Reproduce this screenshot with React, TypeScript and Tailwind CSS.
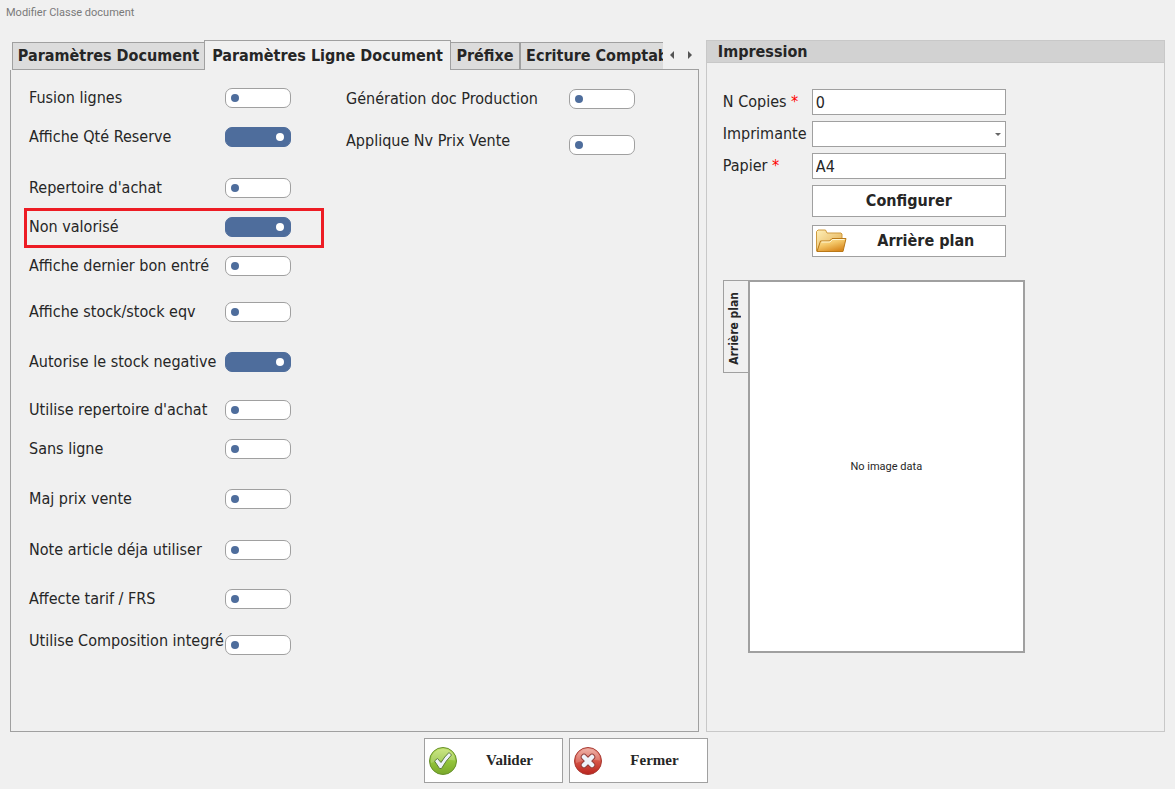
import { FC, ReactNode, useState } from "react";

const tabs = [
    { label: "Paramètres Document", width: "w-[193px]" },
    { label: "Paramètres Ligne Document", width: "w-[247px]" },
    { label: "Préfixe", width: "w-[70px]" },
    { label: "Ecriture Comptable", width: "w-[169px]" },
];

interface Option {
    label: string;
    checked?: boolean;
    highlight?: boolean;
    raised?: boolean;
    gap: string;
}

const leftOptions: Option[] = [
    { label: "Fusion lignes", gap: "mt-0" },
    { label: "Affiche Qté Reserve", gap: "mt-[19px]", checked: true },
    { label: "Repertoire d'achat", gap: "mt-[31px]" },
    { label: "Non valorisé", gap: "mt-[19px]", checked: true, highlight: true },
    { label: "Affiche dernier bon entré", gap: "mt-[19px]" },
    { label: "Affiche stock/stock eqv", gap: "mt-[26px]" },
    { label: "Autorise le stock negative", gap: "mt-[30px]", checked: true },
    { label: "Utilise repertoire d'achat", gap: "mt-7" },
    { label: "Sans ligne", gap: "mt-[19px]" },
    { label: "Maj prix vente", gap: "mt-[30px]" },
    { label: "Note article déja utiliser", gap: "mt-[31px]" },
    { label: "Affecte tarif / FRS", gap: "mt-[29px]" },
    { label: "Utilise Composition integré", gap: "mt-[22px]", raised: true },
];

const rightOptions: Option[] = [
    { label: "Génération doc Production", gap: "mt-px" },
    { label: "Applique Nv Prix Vente", gap: "mt-[22px]", raised: true },
];

const SwitchRow: FC<{ option: Option; id: string; labelWidth: string }> = ({ option, id, labelWidth }) => {
    const [on, setOn] = useState(!!option.checked);
    return (
        <div className={`relative flex items-center ${option.gap}`}>
            <label
                htmlFor={id}
                className={`shrink-0 whitespace-nowrap leading-5 ${labelWidth} ${option.raised ? "pb-2" : ""}`}
            >
                {option.label}
            </label>
            <input
                id={id}
                type="checkbox"
                role="switch"
                checked={on}
                onChange={(e) => setOn(e.target.checked)}
                className="flex h-5 w-[66px] shrink-0 appearance-none items-center rounded-[7px] border border-[#a0a0a0] bg-white px-[5px] before:size-2 before:rounded-full before:bg-[#4e6d9c] before:content-[''] checked:justify-end checked:border-[#4e6d9c] checked:bg-[#4e6d9c] checked:px-1.5 checked:before:bg-white"
            />
            {option.highlight && (
                <div className="pointer-events-none absolute -left-[5px] -top-[9px] h-10 w-[300px] border-3 border-[#ed1c24]" />
            )}
        </div>
    );
};

const FolderIcon = () => (
    <svg width="32" height="24" viewBox="0 0 32 24" className="shrink-0" aria-hidden="true">
        <defs>
            <linearGradient id="folderBack" x1="0" y1="0" x2="1" y2="1">
                <stop offset="0" stopColor="#fff0b8" />
                <stop offset="1" stopColor="#dfa647" />
            </linearGradient>
            <linearGradient id="folderFront" x1="0" y1="0" x2="0.6" y2="1">
                <stop offset="0" stopColor="#fff0b5" />
                <stop offset="0.5" stopColor="#f3c566" />
                <stop offset="1" stopColor="#d98a20" />
            </linearGradient>
        </defs>
        <path d="M1.5 22V2.5L3 1h7.5L12 4h14l1 1v17z" fill="url(#folderBack)" stroke="#cf9a3e" />
        <path d="M5.5 12h9l2.500-2.500h14L28 22.500H2z" fill="url(#folderFront)" stroke="#b97818" strokeLinejoin="round" />
        <path d="M6.5 13H15l2.500-2.500h12" fill="none" stroke="#fff6d2" />
    </svg>
);

const ValidIcon = () => (
    <svg width="30" height="30" viewBox="0 0 30 30" className="shrink-0" aria-hidden="true">
        <defs>
            <linearGradient id="green" x1="0" y1="0" x2="0" y2="1">
                <stop offset="0" stopColor="#c3e26a" />
                <stop offset="0.5" stopColor="#94c53c" />
                <stop offset="1" stopColor="#79a82a" />
            </linearGradient>
        </defs>
        <circle cx="15" cy="15" r="13.5" fill="url(#green)" stroke="#66902b" />
        <path d="M3 14.5a12 11.5 0 0 1 24 0Q15 12 3 17z" fill="#fff" opacity="0.2" />
        <path
            d="M6.5 15l3-2.500 3.500 4Q16.500 10.500 21 6.500l2.500 2.500Q18 14.500 13.500 22.500h-2z"
            fill="#eef3fa"
            stroke="#5f7d3c"
            strokeLinejoin="round"
        />
    </svg>
);

const CloseIcon = () => (
    <svg width="30" height="30" viewBox="0 0 30 30" className="shrink-0" aria-hidden="true">
        <defs>
            <linearGradient id="red" x1="0" y1="0" x2="0" y2="1">
                <stop offset="0" stopColor="#eda79b" />
                <stop offset="0.5" stopColor="#d65547" />
                <stop offset="1" stopColor="#b9231d" />
            </linearGradient>
        </defs>
        <circle cx="15" cy="15" r="13.5" fill="url(#red)" stroke="#a83a33" />
        <path d="M3 14.5a12 11.5 0 0 1 24 0Q15 12 3 17z" fill="#fff" opacity="0.18" />
        <path d="M11 11l8 8M19 11l-8 8" stroke="#93403c" strokeWidth="6.500" strokeLinecap="round" />
        <path d="M11 11l8 8M19 11l-8 8" stroke="#eef3fa" strokeWidth="4.500" strokeLinecap="round" />
    </svg>
);

const FooterButton: FC<{ icon: ReactNode; children: ReactNode }> = ({ icon, children }) => (
    <button
        type="button"
        className="flex h-[45px] w-[139px] items-center border border-[#a0a0a0] bg-white pl-[3px] font-['Liberation_Serif',serif] text-[15px] font-bold"
    >
        {icon}
        <span className="flex-1 text-center">{children}</span>
    </button>
);

const Required = () => <span className="text-[#ff0000]">*</span>;

const App: FC = () => {
    const [active, setActive] = useState(1);

    return (
        <div className="flex min-h-screen flex-col bg-[#f0f0f0] px-[10px] pb-1.5 font-['DejaVu_Sans_Condensed','DejaVu_Sans',sans-serif] text-base text-[#262626]">
            <header className="-ml-1 h-10 pt-[5px]">
                <h1 className="font-['Roboto',sans-serif] text-[11px] leading-4 text-[#7a7a7a]">Modifier Classe document</h1>
            </header>

            <main className="grid flex-1 grid-cols-[3fr_2fr] gap-[7px]">
                <section className="flex min-w-0 flex-col">
                    <div className="flex h-[30px] items-end">
                        <div role="tablist" className="relative flex min-w-0 flex-1 items-end overflow-hidden pl-0.5">
                            {tabs.map((tab, i) => (
                                <button
                                    key={tab.label}
                                    type="button"
                                    role="tab"
                                    aria-selected={i === active}
                                    onClick={() => setActive(i)}
                                    className={`shrink-0 whitespace-nowrap border border-[#a0a0a0] font-bold leading-6 ${tab.width} ${
                                        i === active ? "-mx-px h-[30px] border-b-0 bg-[#f0f0f0]" : "h-7 bg-[#dcdcdc]"
                                    }`}
                                >
                                    {tab.label}
                                </button>
                            ))}
                        </div>
                        <div className="flex h-[30px] w-9 items-center justify-around border-b border-[#a0a0a0]">
                            <button type="button" aria-label="Onglet précédent">
                                <svg width="4" height="8" viewBox="0 0 4 8"><path d="M4 0v8L0 4z" fill="#555" /></svg>
                            </button>
                            <button type="button" aria-label="Onglet suivant">
                                <svg width="4" height="8" viewBox="0 0 4 8"><path d="M0 0v8l4-4z" fill="#555" /></svg>
                            </button>
                        </div>
                    </div>

                    <div role="tabpanel" className="flex flex-1 items-start gap-[55px] border border-t-0 border-[#a0a0a0] pb-4 pl-[18px] pt-[18px]">
                        <div>
                            {leftOptions.map((option, i) => (
                                <SwitchRow key={option.label} option={option} id={`left-${i}`} labelWidth="w-[196px]" />
                            ))}
                        </div>
                        <div>
                            {rightOptions.map((option, i) => (
                                <SwitchRow key={option.label} option={option} id={`right-${i}`} labelWidth="w-[223px]" />
                            ))}
                        </div>
                    </div>
                </section>

                <section className="border border-[#c8c8c8]">
                    <h2 className="border-b border-[#c8c8c8] bg-[#d2d2d2] pl-[11px] font-bold leading-[21px]">Impression</h2>
                    <div className="px-4 pt-[26px]">
                        <div className="grid grid-cols-[89px_194px] items-center gap-y-1.5">
                            <label htmlFor="copies">N Copies <Required /></label>
                            <input id="copies" defaultValue="0" className="h-[26px] border border-[#a0a0a0] bg-white px-[3px]" />
                            <label htmlFor="printer">Imprimante</label>
                            <div className="relative">
                                <select id="printer" className="block h-[26px] w-full appearance-none border border-[#a0a0a0] bg-white px-[3px]">
                                    <option value=""></option>
                                </select>
                                <svg width="6" height="3" viewBox="0 0 6 3" className="pointer-events-none absolute right-[5px] top-3">
                                    <path d="M0 0h6L3 3z" fill="#666" />
                                </svg>
                            </div>
                            <label htmlFor="paper">Papier <Required /></label>
                            <input id="paper" defaultValue="A4" className="h-[26px] border border-[#a0a0a0] bg-white px-[3px]" />
                            <button type="button" className="col-start-2 h-8 border border-[#a0a0a0] bg-white font-bold">
                                Configurer
                            </button>
                            <button type="button" className="col-start-2 mt-0.5 flex h-8 items-center border border-[#a0a0a0] bg-white pl-0.5 font-bold">
                                <FolderIcon />
                                <span className="flex-1 text-center">Arrière plan</span>
                            </button>
                        </div>

                        <div className="mt-[23px] flex items-start">
                            <div className="z-10 -mr-px flex h-[93px] w-[26px] items-center justify-center border border-[#a0a0a0] bg-[#f0f0f0] pr-1 pt-1">
                                <span className="rotate-180 text-xs font-bold [writing-mode:vertical-rl]">Arrière plan</span>
                            </div>
                            <div className="flex h-[373px] w-[277px] items-center justify-center border-2 border-[#a0a0a0] bg-white pt-0.5 font-['Roboto',sans-serif] text-[11px]">
                                No image data
                            </div>
                        </div>
                    </div>
                </section>
            </main>

            <footer className="mt-1.5 flex justify-center gap-1.5 pr-11">
                <FooterButton icon={<ValidIcon />}>Valider</FooterButton>
                <FooterButton icon={<CloseIcon />}>Fermer</FooterButton>
            </footer>
        </div>
    );
};

export default App;
